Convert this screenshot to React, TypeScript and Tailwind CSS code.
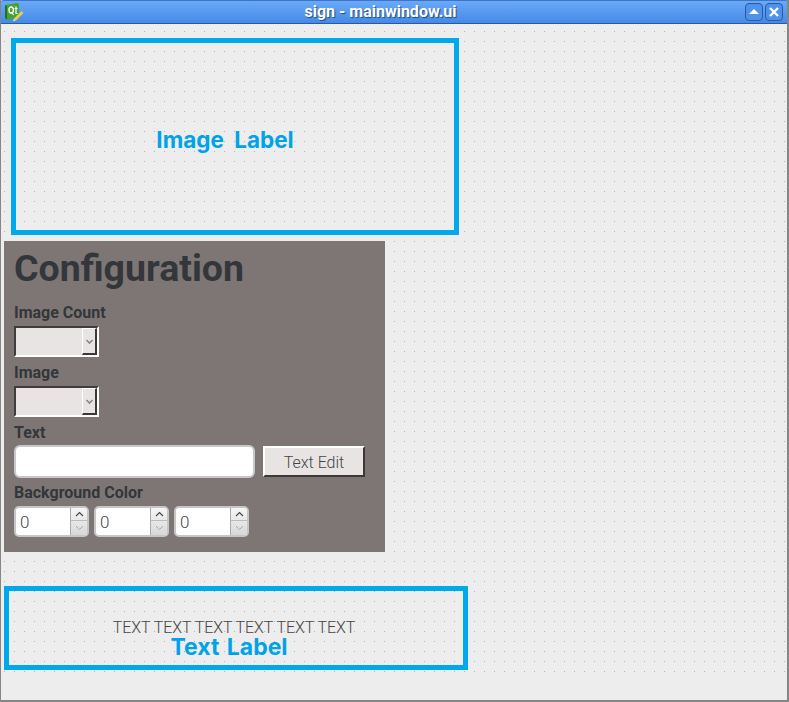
import React from 'react';

const labelClass = "text-[16px] leading-[18px] font-bold text-[#33363a]";

const Combo: React.FC = () => (
  <div className="w-[85px] h-[31px] flex bg-[#e9e4e4] border-[2px] border-t-[#403c3c] border-l-[#403c3c] border-r-white border-b-white">
    <div className="flex-1" />
    <div className="w-[15px] flex items-center justify-center bg-[#e9e4e4] border border-l-white border-t-white border-r-[#3c3838] border-b-[#3c3838] border-r-2 border-b-2">
      <svg width="9" height="7" viewBox="0 0 9 7">
        <path d="M1.5 2 L4.5 5 L7.5 2" fill="none" stroke="#8a8686" strokeWidth="1.6" />
      </svg>
    </div>
  </div>
);

const Spin: React.FC = () => (
  <div className="w-[75px] h-[31px] flex bg-white border-2 border-[#c6c6c6] rounded-[5px] overflow-hidden">
    <div className="flex-1 pl-[4px] text-[17px] leading-[29px] font-light text-[#444]">0</div>
    <div className="w-[17px] flex flex-col border-l border-[#aaa] bg-gradient-to-b from-[#f6f6f6] to-[#d8d8d8]">
      <div className="h-[13px] flex items-center justify-center border-b border-[#bbb]">
        <svg width="9" height="6" viewBox="0 0 9 6">
          <path d="M1 5 L4.5 1.5 L8 5" fill="none" stroke="#444" strokeWidth="1.1" />
        </svg>
      </div>
      <div className="flex-1 flex items-center justify-center">
        <svg width="9" height="6" viewBox="0 0 9 6">
          <path d="M1 1 L4.5 4.5 L8 1" fill="none" stroke="#aaa" strokeWidth="1" />
        </svg>
      </div>
    </div>
  </div>
);

const TitleButton: React.FC<{ children: React.ReactNode }> = ({ children }) => (
  <div className="w-[18px] h-[18px] rounded-[4px] border border-[#2c5a9a] bg-[#4f92ec] flex items-center justify-center">
    {children}
  </div>
);

export default function App() {
  return (
    <div className="w-[789px] h-[702px] flex flex-col bg-[#ededed] overflow-hidden border-l border-r-2 border-b-2 border-[#858585] font-['Roboto',sans-serif]">
      <div className="h-[24px] -ml-px -mr-[2px] shrink-0 flex items-center pl-[5px] pr-[6px] rounded-t-[4px] bg-gradient-to-b from-[#6aa9f9] to-[#458ae7] border-t border-t-[#3f74c4] border-b border-b-[#2b5a96]">
        <svg width="19" height="19" viewBox="0 0 19 19" className="shrink-0">
          <path d="M0 2 L12 0 L14 1 V13 L4 17 L0 15 Z" fill="#46a32f" />
          <path d="M0 2 L2 3 V17 L0 15 Z" fill="#2c6e20" />
          <ellipse cx="6.2" cy="7" rx="2.2" ry="3" fill="none" stroke="#fff" strokeWidth="1.4" />
          <path d="M7 9.5 L8.6 12 M11 3.5 V10.5 H12.5 M9.6 5.5 H12.5" fill="none" stroke="#fff" strokeWidth="1.2" />
          <path d="M9 15.5 L16.5 8 L18.5 10 L11 17.5 Z" fill="#eecb45" />
          <path d="M9 15.5 L11 17.5 L8 18.5 Z" fill="#d8d8e8" />
        </svg>
        <div className="flex-1 text-center text-white font-bold text-[16px] leading-[22px] pr-[8px] [text-shadow:1px_1px_1px_#1f4a80]">sign - mainwindow.ui</div>
        <div className="flex gap-[2px]">
          <TitleButton>
            <svg width="10" height="6" viewBox="0 0 10 6"><path d="M5 0 L10 5 H0 Z" fill="#fff" /></svg>
          </TitleButton>
          <TitleButton>
            <svg width="10" height="10" viewBox="0 0 10 10"><path d="M1 1 L9 9 M9 1 L1 9" stroke="#fff" strokeWidth="2.4" /></svg>
          </TitleButton>
        </div>
      </div>

      <div className="h-[656px] shrink-0 pt-[14px] pl-[3px] bg-[radial-gradient(circle_at_0.5px_0.5px,#b4b4b4_0.6px,transparent_0.7px)] bg-[size:10px_10px] bg-[position:3px_7px]">
        <div className="ml-[7px] w-[448px] h-[197px] border-[5px] border-[#00a8ec] flex items-center justify-center pr-[20px] pt-[6px] font-['Inter',sans-serif] font-bold text-[22.5px] [word-spacing:5px] text-[#00a2e8]">
          Image Label
        </div>

        <div className="mt-[6px] w-[381px] h-[311px] bg-[#7e7675] pl-[10px] flex flex-col">
          <div className="text-[37.5px] leading-[44px] mt-[5px] font-bold text-[#33363a]">Configuration</div>
          <div className={`${labelClass} mt-[14px]`}>Image Count</div>
          <div className="mt-[4px]"><Combo /></div>
          <div className={`${labelClass} mt-[7px]`}>Image</div>
          <div className="mt-[4px]"><Combo /></div>
          <div className={`${labelClass} mt-[7px]`}>Text</div>
          <div className="mt-[3px] flex items-center gap-[8px]">
            <div className="w-[241px] h-[33px] bg-white border-2 border-[#c8c8c8] rounded-[6px]" />
            <button className="w-[102px] h-[31px] pt-[2px] bg-[#e9e4e4] border-2 border-t-white border-l-white border-r-[#3c3838] border-b-[#3c3838] text-[16px] font-light text-[#444]">
              Text Edit
            </button>
          </div>
          <div className={`${labelClass} mt-[6px]`}>Background Color</div>
          <div className="mt-[4px] flex gap-[5px]">
            <Spin /><Spin /><Spin />
          </div>
        </div>

        <div className="mt-[34px] w-[464px] h-[84px] border-[5px] border-[#00a8ec] flex flex-col items-center justify-center pt-[18px] pr-[4px]">
          <div className="text-[16px] leading-[19px] tracking-[-0.07px] font-light text-[#444]">TEXT TEXT TEXT TEXT TEXT TEXT</div>
          <div className="mr-[10px] font-['Inter',sans-serif] font-bold text-[23px] leading-[20px] [word-spacing:2px] text-[#00a2e8]">Text Label</div>
        </div>
      </div>
    </div>
  );
}
